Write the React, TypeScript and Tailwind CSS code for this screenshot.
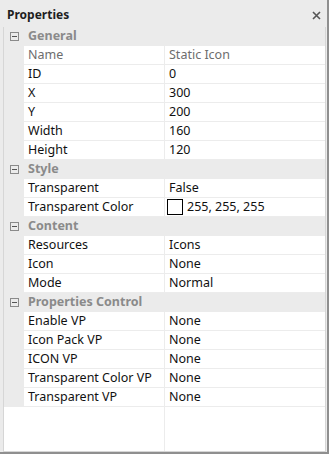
import React from 'react';

type Row =
  | { kind: 'cat'; label: string }
  | { kind: 'prop'; label: string; value: string; muted?: boolean; swatch?: boolean };

const rows: Row[] = [
  { kind: 'cat', label: 'General' },
  { kind: 'prop', label: 'Name', value: 'Static Icon', muted: true },
  { kind: 'prop', label: 'ID', value: '0' },
  { kind: 'prop', label: 'X', value: '300' },
  { kind: 'prop', label: 'Y', value: '200' },
  { kind: 'prop', label: 'Width', value: '160' },
  { kind: 'prop', label: 'Height', value: '120' },
  { kind: 'cat', label: 'Style' },
  { kind: 'prop', label: 'Transparent', value: 'False' },
  { kind: 'prop', label: 'Transparent Color', value: '255, 255, 255', swatch: true },
  { kind: 'cat', label: 'Content' },
  { kind: 'prop', label: 'Resources', value: 'Icons' },
  { kind: 'prop', label: 'Icon', value: 'None' },
  { kind: 'prop', label: 'Mode', value: 'Normal' },
  { kind: 'cat', label: 'Properties Control' },
  { kind: 'prop', label: 'Enable VP', value: 'None' },
  { kind: 'prop', label: 'Icon Pack VP', value: 'None' },
  { kind: 'prop', label: 'ICON VP', value: 'None' },
  { kind: 'prop', label: 'Transparent Color VP', value: 'None' },
  { kind: 'prop', label: 'Transparent VP', value: 'None' },
];

function MinusBox() {
  return (
    <svg width="9" height="9" viewBox="0 0 9 9" className="block">
      <rect x="0.5" y="0.5" width="8" height="8" fill="none" stroke="#8a8a8a" />
      <line x1="2" y1="4.5" x2="7" y2="4.5" stroke="#555" />
    </svg>
  );
}

export default function App() {
  return (
    <div
      className="w-[329px] h-[454px] bg-[#ebebeb] flex flex-col border-r-2 border-b-2 border-[#8f8f8f] text-[12.5px] leading-none"
      style={{ fontFamily: '"Noto Sans", "Open Sans", sans-serif' }}
    >
      {/* title bar */}
      <div className="h-[27px] shrink-0 flex items-center justify-between pl-[7px] pr-[6px] pt-[3px]">
        <span className="font-bold text-[#1e1e1e] text-[12px]">Properties</span>
        <svg width="9" height="9" viewBox="0 0 9 9">
          <path d="M1 1L8 8M8 1L1 8" stroke="#555" strokeWidth="1.6" />
        </svg>
      </div>

      {/* grid */}
      <div className="flex-1 flex flex-col ml-[3px] mr-[1px] bg-white border-r border-b border-l border-[#d6d6d6]">
        {rows.map((r, i) =>
          r.kind === 'cat' ? (
            <div key={i} className="h-[19px] flex items-center bg-[#ebebeb]">
              <div className="w-[20px] flex justify-center pl-[1px]">
                <MinusBox />
              </div>
              <span className="pl-[4px] font-bold text-[#8a8a8a]">{r.label}</span>
            </div>
          ) : (
            <div key={i} className="h-[19px] flex">
              <div className="w-[20px] bg-[#ebebeb]" />
              <div className="flex-1 flex border-b border-[#ececec]">
                <div
                  className={`w-[141px] flex items-center pl-[4px] border-r border-[#ececec] ${
                    r.muted ? 'text-[#6d6d6d]' : 'text-[#111]'
                  }`}
                >
                  {r.label}
                </div>
                <div className={`flex-1 flex items-center pl-[4px] ${r.muted ? 'text-[#6d6d6d]' : 'text-[#111]'}`}>
                  {r.swatch && <span className="w-[16px] h-[16px] border border-black bg-white mr-[4px] -ml-[2px]" />}
                  {r.value}
                </div>
              </div>
            </div>
          )
        )}
        <div className="flex-1 flex">
          <div className="w-[161px] border-r border-[#ececec]" />
          <div className="flex-1" />
        </div>
      </div>
    </div>
  );
}
